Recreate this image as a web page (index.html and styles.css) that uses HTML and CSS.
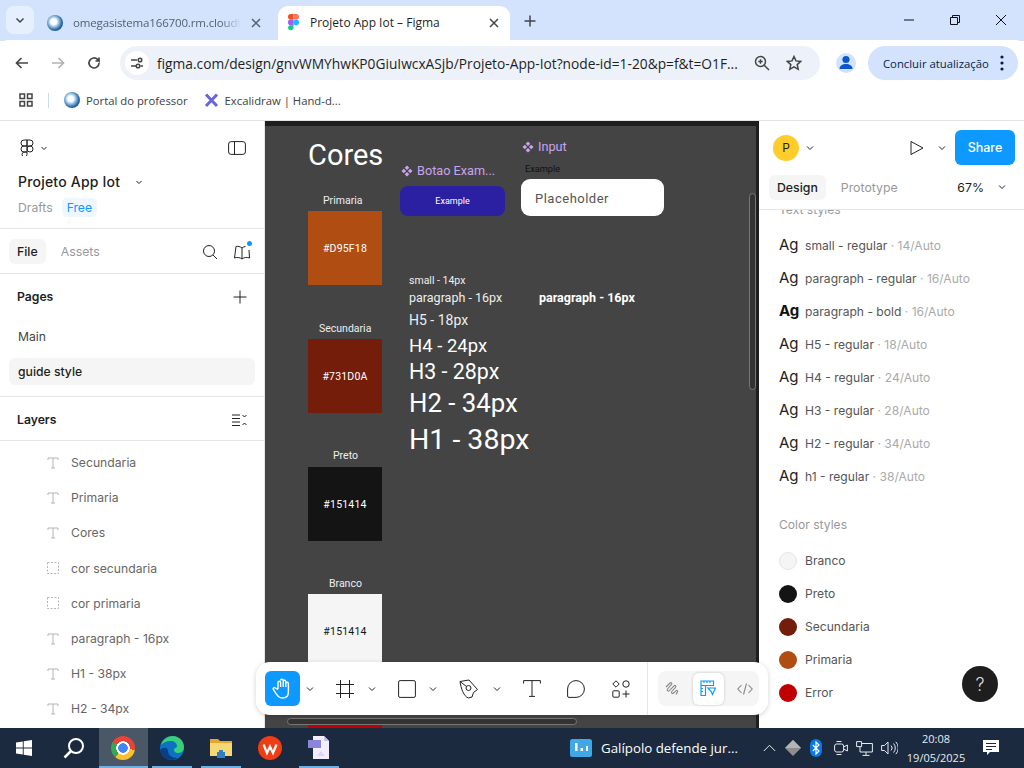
FILE: index.html
```html
<!DOCTYPE html>
<html lang="en">
<head>
    <meta charset="UTF-8">
    <meta name="viewport" content="width=device-width, initial-scale=1.0">
    <title>Projeto App Iot – Figma</title>
    <link rel="stylesheet" href="styles.css">
</head>
<body>
<div class="screen">

    <!-- browser tabs -->
    <div class="tabstrip">
        <div class="tab-menu">
            <svg width="12" height="12" viewBox="0 0 12 12"><path d="M2.5 4.5 6 8l3.5-3.5" class="ic-dark2"/></svg>
        </div>
        <div class="tab">
            <span class="globe"></span>
            <span class="tab-title">omegasistema166700.rm.cloudt</span>
            <svg class="tab-x" width="10" height="10" viewBox="0 0 10 10"><path d="M1 1l8 8M9 1 1 9" class="ic-gray"/></svg>
        </div>
        <div class="tab tab-active">
            <svg width="11" height="17" viewBox="0 0 11 17" class="figma-color">
                <path d="M0 2.8A2.8 2.8 0 0 1 2.8 0h2.7v5.6H2.8A2.8 2.8 0 0 1 0 2.8z" fill="#f24e1e"/>
                <path d="M5.5 0h2.7a2.8 2.8 0 0 1 0 5.6H5.5z" fill="#ff7262"/>
                <path d="M0 8.4a2.8 2.8 0 0 1 2.8-2.8h2.7v5.6H2.8A2.8 2.8 0 0 1 0 8.4z" fill="#a259ff"/>
                <circle cx="8.2" cy="8.4" r="2.8" fill="#1abcfe"/>
                <path d="M0 14a2.8 2.8 0 0 1 2.8-2.8h2.7V14a2.8 2.8 0 0 1-5.5 0z" fill="#0acf83"/>
            </svg>
            <span class="tab-title">Projeto App Iot – Figma</span>
            <svg class="tab-x" width="10" height="10" viewBox="0 0 10 10"><path d="M1 1l8 8M9 1 1 9" class="ic-dark2"/></svg>
        </div>
        <svg class="new-tab" width="12" height="12" viewBox="0 0 12 12"><path d="M6 .5v11M.5 6h11" class="ic-dark2"/></svg>
        <div class="window-btns">
            <svg width="12" height="12" viewBox="0 0 12 12"><path d="M1 6h10" class="ic-thin"/></svg>
            <svg width="12" height="12" viewBox="0 0 12 12"><path d="M1.500 3.500h7v7h-7zM3.500 3.500v-2h7v7h-2" class="ic-thin"/></svg>
            <svg width="14" height="14" viewBox="0 0 14 14"><path d="M2 2l10 10M12 2 2 12" class="ic-thin"/></svg>
        </div>
    </div>

    <!-- address bar -->
    <div class="toolbar">
        <svg width="16" height="16" viewBox="0 0 16 16"><path d="M14 8H2.500M7.500 3l-5 5 5 5" class="ic-nav"/></svg>
        <svg width="16" height="16" viewBox="0 0 16 16"><path d="M2 8h11.500M8.500 3l5 5-5 5" class="ic-nav ic-off"/></svg>
        <svg width="16" height="16" viewBox="0 0 16 16"><path d="M13 8a5 5 0 1 1-1.500-3.600L13 6V2.500M13 6H9.500" class="ic-nav"/></svg>
        <div class="omnibox">
            <span class="site-info">
                <svg width="14" height="14" viewBox="0 0 14 14"><path d="M1 4h6M10.500 10H13M1 10h5" class="ic-dark2"/><circle cx="10" cy="4" r="1.800" class="ic-dark2"/><circle cx="8" cy="10" r="1.800" class="ic-dark2"/></svg>
            </span>
            <span class="url">figma.com/design/gnvWMYhwKP0GiuIwcxASjb/Projeto-App-Iot?node-id=1-20&amp;p=f&amp;t=O1F...</span>
            <svg width="16" height="16" viewBox="0 0 16 16"><circle cx="6.500" cy="6.500" r="5" class="ic-dark2"/><path d="M10.200 10.200 15 15M4.300 6.500h4.400M6.500 4.300v4.400" class="ic-dark2"/></svg>
            <svg width="16" height="16" viewBox="0 0 16 16" class="star"><path d="M8 1.500l2 4.400 4.800.5-3.600 3.200 1 4.700L8 11.900l-4.200 2.400 1-4.700L1.200 6.400 6 5.900z" class="ic-dark2"/></svg>
        </div>
        <span class="profile">
            <svg width="18" height="18" viewBox="0 0 18 18"><circle cx="9" cy="5.500" r="3.600" fill="#0b57d0"/><path d="M2.500 15c0-3.400 3-5 6.500-5s6.500 1.600 6.500 5z" fill="#0b57d0"/></svg>
        </span>
        <div class="update-pill">
            <span>Concluir atualização</span>
            <svg width="4" height="16" viewBox="0 0 4 16"><circle cx="2" cy="2" r="1.600"/><circle cx="2" cy="8" r="1.600"/><circle cx="2" cy="14" r="1.600"/></svg>
        </div>
    </div>

    <!-- bookmarks -->
    <div class="bookmarks">
        <svg width="14" height="14" viewBox="0 0 14 14"><path d="M1 1h4.500v4.500H1zM8.500 1H13v4.500H8.500zM1 8.500h4.500V13H1zM8.500 8.500H13V13H8.500z" class="ic-dark2"/></svg>
        <span class="bm-sep"></span>
        <span class="bm"><span class="globe"></span>Portal do professor</span>
        <span class="bm">
            <svg width="15" height="15" viewBox="0 0 15 15"><path d="M2 1.500 13 13M13 1.500 2 13" stroke="#6965db" stroke-width="3" fill="none"/></svg>
            Excalidraw | Hand-d...
        </span>
    </div>

    <div class="app">
        <!-- left panel -->
        <aside class="left-panel">
            <div class="file-head">
                <div class="head-icons">
                    <div class="logo-wrap">
                        <svg width="16" height="17" viewBox="0 0 16 17"><path d="M8 1H5a3 3 0 0 0 0 6h3zM8 1h3a3 3 0 0 1 0 6H8zM8 7H5a3 3 0 0 0 0 6h3zM8 13H5a2.500 2.500 0 1 0 3 2.500zM14 10a3 3 0 1 1-6 0 3 3 0 0 1 6 0z" class="ic-fig"/></svg>
                        <svg width="8" height="8" viewBox="0 0 8 8"><path d="M1.500 3 4 5.500 6.500 3" class="ic-fig"/></svg>
                    </div>
                    <svg width="18" height="14" viewBox="0 0 18 14"><rect x=".6" y=".6" width="16.800" height="12.800" rx="2.500" class="ic-fig"/><path d="M6.500 1v12" class="ic-fig"/></svg>
                </div>
                <div class="file-name">
                    <span>Projeto App Iot</span>
                    <svg width="8" height="8" viewBox="0 0 8 8"><path d="M1.500 3 4 5.500 6.500 3" class="ic-fig"/></svg>
                </div>
                <div class="file-meta">
                    <span class="drafts">Drafts</span>
                    <span class="free">Free</span>
                </div>
            </div>
            <div class="file-tabs">
                <span class="pill-tab">File</span>
                <span class="muted-tab">Assets</span>
                <svg class="search-ic" width="16" height="16" viewBox="0 0 16 16"><circle cx="7" cy="7" r="5.500" class="ic-fig"/><path d="M11 11l4 4" class="ic-fig"/></svg>
                <span class="library">
                    <svg width="18" height="16" viewBox="0 0 18 16"><path d="M9 4C7.500 2.500 4.500 2 3 2.500L1.500 14C4 13 7.500 13.500 9 15c1.500-1.500 5-2 7.500-1L16 6M9 4c.8-.8 2-1.300 3.500-1.500M9 4v11" class="ic-fig"/></svg>
                    <span class="dot"></span>
                </span>
            </div>
            <div class="pages">
                <div class="section-row">
                    <strong>Pages</strong>
                    <svg width="14" height="14" viewBox="0 0 14 14"><path d="M7 .5v13M.5 7h13" class="ic-fig"/></svg>
                </div>
                <div class="page-row page-first">Main</div>
                <div class="page-row page-on">guide style</div>
            </div>
            <div class="section-row layers-head">
                <strong>Layers</strong>
                <svg width="15" height="12" viewBox="0 0 15 12"><path d="M0 1h8M0 4.500h8M0 8h8M0 11.500h8M10.500 1l2 2 2-2M10.500 11l2-2 2 2" class="ic-fig"/></svg>
            </div>
            <div class="layer-list">
                <div class="layer"><svg width="12" height="12" viewBox="0 0 12 12"><path d="M1 3V1h10v2M6 1v10M4 11h4" class="ic-layer"/></svg>Secundaria</div>
                <div class="layer"><svg width="12" height="12" viewBox="0 0 12 12"><path d="M1 3V1h10v2M6 1v10M4 11h4" class="ic-layer"/></svg>Primaria</div>
                <div class="layer"><svg width="12" height="12" viewBox="0 0 12 12"><path d="M1 3V1h10v2M6 1v10M4 11h4" class="ic-layer"/></svg>Cores</div>
                <div class="layer"><svg width="12" height="12" viewBox="0 0 12 12"><rect x=".5" y=".5" width="11" height="11" class="ic-layer ic-dash"/></svg>cor secundaria</div>
                <div class="layer"><svg width="12" height="12" viewBox="0 0 12 12"><rect x=".5" y=".5" width="11" height="11" class="ic-layer ic-dash"/></svg>cor primaria</div>
                <div class="layer"><svg width="12" height="12" viewBox="0 0 12 12"><path d="M1 3V1h10v2M6 1v10M4 11h4" class="ic-layer"/></svg>paragraph - 16px</div>
                <div class="layer"><svg width="12" height="12" viewBox="0 0 12 12"><path d="M1 3V1h10v2M6 1v10M4 11h4" class="ic-layer"/></svg>H1 - 38px</div>
                <div class="layer"><svg width="12" height="12" viewBox="0 0 12 12"><path d="M1 3V1h10v2M6 1v10M4 11h4" class="ic-layer"/></svg>H2 - 34px</div>
            </div>
        </aside>

        <!-- canvas -->
        <main class="canvas">
            <div class="frame"></div>
            <div class="c-title">Cores</div>

            <div class="sw-label lb-prim">Primaria</div>
            <div class="swatch sw-prim">#D95F18</div>
            <div class="sw-label lb-sec">Secundaria</div>
            <div class="swatch sw-sec">#731D0A</div>
            <div class="sw-label lb-pre">Preto</div>
            <div class="swatch sw-pre">#151414</div>
            <div class="sw-label lb-bra">Branco</div>
            <div class="swatch sw-bra">#151414</div>
            <div class="swatch sw-err"></div>

            <div class="comp-name cn-btn">
                <svg width="12" height="12" viewBox="0 0 12 12"><path d="M6 .5 8.300 2.800 6 5.100 3.700 2.800zM2.800 3.700 5.100 6 2.800 8.300.5 6zM9.200 3.700 11.500 6 9.200 8.300 6.900 6zM6 6.900 8.300 9.200 6 11.500 3.700 9.200z" fill="#c9a5ee"/></svg>
                Botao Exam...
            </div>
            <div class="c-button">Example</div>
            <div class="comp-name cn-input">
                <svg width="12" height="12" viewBox="0 0 12 12"><path d="M6 .5 8.300 2.800 6 5.100 3.700 2.800zM2.800 3.700 5.100 6 2.800 8.300.5 6zM9.200 3.700 11.500 6 9.200 8.300 6.900 6zM6 6.900 8.300 9.200 6 11.500 3.700 9.200z" fill="#c9a5ee"/></svg>
                Input
            </div>
            <div class="c-input-label">Example</div>
            <div class="c-input">Placeholder</div>

            <div class="type t-small">small - 14px</div>
            <div class="type t-par">paragraph - 16px</div>
            <div class="type t-bold">paragraph - 16px</div>
            <div class="type t-h5">H5 - 18px</div>
            <div class="type t-h4">H4 - 24px</div>
            <div class="type t-h3">H3 - 28px</div>
            <div class="type t-h2">H2 - 34px</div>
            <div class="type t-h1">H1 - 38px</div>

            <div class="scroll-v"></div>
            <div class="scroll-h"></div>
        </main>

        <!-- right panel -->
        <aside class="right-panel">
            <div class="right-head">
                <div class="share-row">
                    <span class="avatar">P</span>
                    <svg class="chev-av" width="8" height="8" viewBox="0 0 8 8"><path d="M1 2.500 4 5.500 7 2.500" class="ic-fig"/></svg>
                    <svg class="play" width="14" height="16" viewBox="0 0 14 16"><path d="M1 1.500v13L13 8z" class="ic-fig"/></svg>
                    <svg class="chev-play" width="8" height="8" viewBox="0 0 8 8"><path d="M1 2.500 4 5.500 7 2.500" class="ic-fig"/></svg>
                    <span class="share">Share</span>
                </div>
                <div class="mode-row">
                    <span class="pill-tab">Design</span>
                    <span class="muted-tab">Prototype</span>
                    <span class="zoom-val">67%</span>
                    <svg width="8" height="8" viewBox="0 0 8 8"><path d="M1 2.500 4 5.500 7 2.500" class="ic-fig"/></svg>
                </div>
            </div>
            <div class="styles">
                <div class="styles-title">Text styles</div>
                <div class="style-row"><span class="ag">Ag</span>small - regular<span class="dim">&nbsp;· 14/Auto</span></div>
                <div class="style-row"><span class="ag">Ag</span>paragraph - regular<span class="dim">&nbsp;· 16/Auto</span></div>
                <div class="style-row"><span class="ag ag-bold">Ag</span>paragraph - bold<span class="dim">&nbsp;· 16/Auto</span></div>
                <div class="style-row"><span class="ag">Ag</span>H5 - regular<span class="dim">&nbsp;· 18/Auto</span></div>
                <div class="style-row"><span class="ag">Ag</span>H4 - regular<span class="dim">&nbsp;· 24/Auto</span></div>
                <div class="style-row"><span class="ag">Ag</span>H3 - regular<span class="dim">&nbsp;· 28/Auto</span></div>
                <div class="style-row"><span class="ag">Ag</span>H2 - regular<span class="dim">&nbsp;· 34/Auto</span></div>
                <div class="style-row"><span class="ag">Ag</span>h1 - regular<span class="dim">&nbsp;· 38/Auto</span></div>
                <div class="styles-title colors-title">Color styles</div>
                <div class="style-row"><span class="color c-branco"></span>Branco</div>
                <div class="style-row"><span class="color c-preto"></span>Preto</div>
                <div class="style-row"><span class="color c-sec"></span>Secundaria</div>
                <div class="style-row"><span class="color c-prim"></span>Primaria</div>
                <div class="style-row"><span class="color c-err"></span>Error</div>
            </div>
            <div class="help">?</div>
        </aside>

        <!-- floating tools -->
        <div class="tools">
            <div class="tool-main">
                <span class="tool-on">
                    <svg width="22" height="23" viewBox="0 0 22 23"><path d="M6 12V5.500a1.300 1.300 0 0 1 2.600 0V10m0-6.500a1.300 1.300 0 0 1 2.600 0V10m0-5.500a1.300 1.300 0 0 1 2.600 0V10m0-3.500a1.300 1.300 0 0 1 2.600 0v8.500c0 4-2.500 6-6 6-3 0-4.500-1.500-6-4l-3-4.500c-.8-1.500 1-2.500 2-1.500L6 12.500" class="ic-white"/></svg>
                </span>
                <svg class="tc" width="8" height="8" viewBox="0 0 8 8"><path d="M1 2.500 4 5.500 7 2.500" class="ic-fig"/></svg>
                <svg class="ti" width="18" height="18" viewBox="0 0 18 18"><path d="M4.500 0v18M13.500 0v18M0 4.500h18M0 13.500h18" class="ic-fig"/></svg>
                <svg class="tc" width="8" height="8" viewBox="0 0 8 8"><path d="M1 2.500 4 5.500 7 2.500" class="ic-fig"/></svg>
                <svg class="ti" width="18" height="18" viewBox="0 0 18 18"><rect x=".6" y=".6" width="16.800" height="16.800" rx="1.500" class="ic-fig"/></svg>
                <svg class="tc" width="8" height="8" viewBox="0 0 8 8"><path d="M1 2.500 4 5.500 7 2.500" class="ic-fig"/></svg>
                <svg class="ti" width="20" height="20" viewBox="0 0 20 20"><path d="M1 2.500 10 1l8.500 9.500-4 3-1.500 4.500-3.500 1C4.500 17.500 2 9 1 2.500z" class="ic-fig"/><circle cx="9.500" cy="9" r="2.500" class="ic-fig"/><path d="M1 2.500 7.500 7.500" class="ic-fig"/></svg>
                <svg class="tc" width="8" height="8" viewBox="0 0 8 8"><path d="M1 2.500 4 5.500 7 2.500" class="ic-fig"/></svg>
                <svg class="ti" width="18" height="17" viewBox="0 0 18 17"><path d="M.6 3.500V.6h16.800v2.900M9 .6v15.800M6 16.400h6" class="ic-fig"/></svg>
                <svg class="ti" width="18" height="18" viewBox="0 0 18 18"><path d="M9 .6a8.400 8.400 0 0 1 0 16.800H2a1.400 1.400 0 0 1-1.400-1.400V9A8.400 8.400 0 0 1 9 .6z" class="ic-fig"/></svg>
                <svg class="ti" width="18" height="18" viewBox="0 0 18 18"><path d="M4 .8 7.200 4 4 7.200.8 4z" class="ic-fig"/><circle cx="14" cy="4" r="3.200" class="ic-fig"/><rect x=".8" y="10.800" width="6.400" height="6.400" rx="1" class="ic-fig"/><path d="M14 10.500v7M10.500 14h7" class="ic-fig"/></svg>
            </div>
            <div class="tool-modes">
                <svg width="16" height="16" viewBox="0 0 16 16"><path d="M2 6 6 2c1-1 2.500.2 1.500 1.300L3.500 8c-1 1.200.5 2.800 1.800 1.600L10 4.800c1-1 2.500.3 1.500 1.500L7.800 10.500c-1 1.200.5 2.700 1.800 1.500l2.400-2.200c1-.9 2.200.3 1.400 1.300L12 13.500" class="ic-mode"/></svg>
                <span class="mode-on">
                    <svg width="16" height="17" viewBox="0 0 16 17"><path d="M1 1h12.500v4.500H5.500V15.500H1zM1 5.500h4.500M4 1v2M7 1v2M10 1v2M1 8.500h2M1 11.500h2" class="ic-blue"/><path d="M8 8h7.500l-3 6.500-1.300-3z" class="ic-blue"/></svg>
                </span>
                <svg width="16" height="12" viewBox="0 0 16 12"><path d="M4.500 2 .8 6l3.700 4M11.500 2l3.700 4-3.700 4M9.500 .5l-3 11" class="ic-mode"/></svg>
            </div>
        </div>
    </div>

    <!-- windows taskbar -->
    <footer class="taskbar">
        <span class="tb-item tb-start">
            <svg width="16" height="16" viewBox="0 0 16 16"><path d="M0 2.400 6.800 1.400v6.200H0zM7.700 1.300 16 0v7.600H7.700zM0 8.500h6.800v6.100L0 13.600zM7.700 8.500H16V16l-8.300-1.200z" fill="#fff"/></svg>
        </span>
        <span class="tb-item tb-search">
            <svg width="22" height="22" viewBox="0 0 22 22"><circle cx="13" cy="9" r="7" fill="none" stroke="#fff" stroke-width="2"/><path d="M8 14 1.500 20.500" stroke="#fff" stroke-width="2.500" fill="none"/></svg>
        </span>
        <span class="tb-item tb-app tb-current"><span class="chrome-ic"></span></span>
        <span class="tb-item tb-app tb-open">
            <svg width="24" height="24" viewBox="0 0 24 24"><circle cx="12" cy="12" r="12" fill="#0c72c4"/><path d="M1 9C3 3 8 0 13 0c6 0 11 5 11 11 0 4-3 6-6 6-2 0-4-1-4-3s3-2 3-4c0-3-3-5-6-5C6 5 3 7 1 9z" fill="#38d17a"/><path d="M8 15c0 4 4 7 9 7-2 1.500-4 2-5 2-6 0-11-4-12-10 3-3 8-3 8 1z" fill="#0a3f86"/></svg>
        </span>
        <span class="tb-item tb-app tb-open">
            <svg width="22" height="20" viewBox="0 0 22 20"><path d="M0 1h8l2 2h12v15H0z" fill="#e3a82b"/><path d="M0 5h22v13H0z" fill="#f8d775"/><path d="M7 14h8v6H7z" fill="#2f7fc1"/><path d="M9 12h4v2H9z" fill="#2f7fc1"/></svg>
        </span>
        <span class="tb-item tb-app">
            <svg width="24" height="24" viewBox="0 0 24 24"><circle cx="12" cy="12" r="12" fill="#f03d14"/><path d="M5.500 8.500 9 17l3-6.500 3 6.500 3.500-8.500" fill="none" stroke="#fff" stroke-width="2.200"/></svg>
        </span>
        <span class="tb-item tb-app tb-open">
            <svg width="22" height="24" viewBox="0 0 22 24"><path d="M5 0h11l5 5v18H5z" fill="#f2eefb"/><path d="M16 0l5 5h-5z" fill="#c9bdf0"/><path d="M0 4h13v8H0z" fill="#8d84dc"/><path d="M9 20l4-5 4 5z" fill="#ddd6f6"/></svg>
        </span>
        <div class="tb-news">
            <svg width="22" height="18" viewBox="0 0 22 18"><rect width="22" height="18" rx="2.500" fill="#3fa9e8"/><path d="M5 4h2.500v8H5zM10.500 9H13v3h-2.500zM16 7h2v5h-2z" fill="#fff"/></svg>
            <span>Galípolo defende jur...</span>
        </div>
        <div class="tray">
            <svg width="13" height="8" viewBox="0 0 13 8"><path d="M.8 7 6.500 1.300 12.200 7" class="ic-tray"/></svg>
            <svg width="16" height="16" viewBox="0 0 16 16"><path d="M8 0l8 8-8 8-8-8z" fill="#8e8e8e"/><path d="M8 0l8 8H0z" fill="#b5b5b5"/></svg>
            <span class="bt">
                <svg width="8" height="14" viewBox="0 0 8 14"><path d="M.8 4 7 10 4 13V1l3 3-6.200 6" fill="none" stroke="#fff" stroke-width="1.200"/></svg>
            </span>
            <svg class="tray-meet" width="14" height="16" viewBox="0 0 14 16"><rect x=".6" y="4" width="9" height="8" rx="2" class="ic-tray"/><path d="M9.600 7 13.400 5v6L9.600 9M2.500 1.500h5M2.500 14.500h5" class="ic-tray"/></svg>
            <svg class="tray-net" width="17" height="15" viewBox="0 0 17 15"><path d="M.6.600h5v5h-5zM5.600 2.500h10.800v8.500H4v-5.400M10 11v3M6.500 14.400h7" class="ic-tray"/></svg>
            <svg class="tray-vol" width="17" height="14" viewBox="0 0 17 14"><path d="M.6 4.500h2.800L7 1v12L3.400 9.500H.6zM10 4.500a3.500 3.500 0 0 1 0 5M12.500 2.500a6.500 6.500 0 0 1 0 9M14.800.8a9 9 0 0 1 0 12.400" class="ic-tray"/></svg>
            <div class="clock"><span>20:08</span><span>19/05/2025</span></div>
            <svg class="notif" width="17" height="16" viewBox="0 0 17 16"><path d="M0 0h16v12H7l-3 3v-3H0z" fill="#fff"/><path d="M3 3.500h10M3 6.500h10M3 9.500h6" stroke="#1b2a3f" fill="none"/></svg>
        </div>
    </footer>
</div>
</body>
</html>
```

FILE: styles.css
```css
* {
    box-sizing: border-box;
}
html, body {
    margin: 0;
    padding: 0;
}
body {
    font-family: Inter, "Liberation Sans", sans-serif;
    color: #1e1e1e;
    background: #fff;
}
svg {
    flex: none;
    display: block;
}
.screen {
    width: 1024px;
    height: 768px;
    display: flex;
    flex-direction: column;
    overflow: hidden;
}

/* icon strokes */
.ic-dark2, .ic-gray, .ic-thin, .ic-nav, .ic-fig, .ic-layer, .ic-white, .ic-mode, .ic-blue, .ic-tray {
    fill: none;
    stroke: #444;
    stroke-width: 1.500;
}
.ic-gray { stroke: #55606e; }
.ic-thin { stroke: #111; stroke-width: 1; }
.ic-nav { stroke: #474747; stroke-width: 1.700; }
.ic-off { stroke: #b0b3b8; }
.ic-fig { stroke: #222; stroke-width: 1; }
.ic-layer { stroke: #b5b5b5; stroke-width: 1; }
.ic-dash { stroke-dasharray: 2 1.500; }
.ic-white { stroke: #fff; stroke-width: 1.400; }
.ic-mode { stroke: #888; stroke-width: 1.100; }
.ic-blue { stroke: #0d99ff; stroke-width: 1.200; }
.ic-tray { stroke: #e8ecf1; stroke-width: 1; }

/* browser chrome */
.tabstrip {
    height: 41px;
    background: #d3e3fd;
    display: flex;
    align-items: flex-end;
    flex: none;
    padding-left: 6px;
    font-family: "Open Sans", "Noto Sans", sans-serif;
    font-size: 12px;
}
.tab-menu {
    width: 28px;
    height: 28px;
    margin-bottom: 7px;
    border-radius: 8px;
    background: #e6effe;
    display: flex;
    align-items: center;
    justify-content: center;
}
.tab {
    width: 238px;
    height: 35px;
    display: flex;
    align-items: center;
    padding: 0 11px 2px 13px;
}
.tab .tab-title {
    margin-left: 10px;
    flex: 1;
    white-space: nowrap;
    font-size: 11.500px;
    letter-spacing: -.15px;
    color: #55606e;
    -webkit-mask-image: linear-gradient(90deg, #000 88%, transparent);
    mask-image: linear-gradient(90deg, #000 88%, transparent);
}
.tab-x {
    margin-left: 10px;
}
.tab-active {
    width: 232px;
    margin-left: 6px;
    background: #fff;
    border-radius: 10px 10px 0 0;
    padding-left: 10px;
}
.tab-active .tab-title {
    color: #1f1f1f;
    font-size: 12px;
    letter-spacing: 0;
    -webkit-mask-image: none;
    mask-image: none;
    margin-left: 11px;
}
.globe {
    width: 16px;
    height: 16px;
    flex: none;
    border-radius: 50%;
    background: radial-gradient(circle at 42% 42%, #fff 0 22%, #9cc6e6 38%, #2a6ca8 62%, #0e2c5c 100%);
}
.new-tab {
    margin: 0 0 14px 14px;
}
.window-btns {
    margin-left: auto;
    width: 140px;
    height: 41px;
    display: flex;
    align-items: center;
    justify-content: space-between;
    padding: 0 16px 2px 19px;
}
.toolbar {
    height: 40px;
    flex: none;
    background: #fff;
    margin-top: -1px;
    border-radius: 8px 8px 0 0;
    display: flex;
    align-items: center;
    padding: 6px 0 0 14px;
    gap: 20px;
    font-family: "Open Sans", "Noto Sans", sans-serif;
}
.omnibox {
    width: 700px;
    height: 34px;
    margin-left: -2px;
    border-radius: 17px;
    background: #edf2fa;
    display: flex;
    align-items: center;
    padding: 0 16px 0 5px;
    flex: none;
}
.site-info {
    width: 24px;
    height: 24px;
    border-radius: 50%;
    background: #fff;
    display: flex;
    align-items: center;
    justify-content: center;
    flex: none;
}
.url {
    margin-left: 8px;
    font-size: 13.750px;
    color: #1f1f1f;
    white-space: nowrap;
    width: 597px;
    flex: none;
}
.star {
    margin-left: 16px;
}
.profile {
    width: 20px;
    height: 20px;
    flex: none;
    margin-left: -4px;
    border-radius: 50%;
    background: #d3e3fd;
    display: flex;
    align-items: center;
    justify-content: center;
}
.update-pill {
    width: 150px;
    height: 34px;
    flex: none;
    margin-left: -8px;
    border-radius: 17px;
    background: #d3e3fd;
    display: flex;
    align-items: center;
    justify-content: space-between;
    padding: 0 14px 0 15px;
    font-size: 11.300px;
    color: #041e49;
    white-space: nowrap;
}
.update-pill svg {
    fill: #041e49;
}
.bookmarks {
    height: 41px;
    flex: none;
    background: #fff;
    display: flex;
    align-items: center;
    padding: 0 0 0 19px;
    border-bottom: 1px solid #e3e3e3;
    font-family: "Open Sans", "Noto Sans", sans-serif;
    font-size: 11.300px;
    color: #3c4043;
}
.bm-sep {
    width: 1px;
    height: 15px;
    background: #c9dafb;
    margin: 0 15px;
}
.bm {
    display: flex;
    align-items: center;
    gap: 6px;
    margin-right: 16px;
    white-space: nowrap;
}

/* figma layout */
.app {
    height: 607px;
    flex: none;
    display: flex;
    position: relative;
}
.left-panel {
    width: 265px;
    flex: none;
    border-right: 1px solid #e6e6e6;
    display: flex;
    flex-direction: column;
    font-size: 12.200px;
}
.file-head {
    height: 108px;
    flex: none;
    border-bottom: 1px solid #e6e6e6;
    padding: 18px 18px 0 19px;
}
.head-icons {
    display: flex;
    align-items: center;
    justify-content: space-between;
}
.logo-wrap {
    display: flex;
    align-items: center;
    gap: 5px;
}
.file-name {
    margin-top: 17px;
    margin-left: -1px;
    display: flex;
    align-items: center;
    gap: 15px;
    font-size: 14px;
    font-weight: 500;
    letter-spacing: .2px;
}
.file-meta {
    margin-top: 8px;
    margin-left: -1px;
    display: flex;
    align-items: center;
    gap: 9px;
}
.drafts {
    color: #999;
}
.free {
    color: #0d99ff;
    background: #eef7ff;
    border-radius: 5px;
    padding: 2px 5px;
}
.file-tabs {
    height: 45px;
    flex: none;
    border-bottom: 1px solid #e6e6e6;
    display: flex;
    align-items: center;
    padding: 1px 13px 0 9px;
}
.pill-tab {
    background: #f5f5f5;
    border-radius: 6px;
    padding: 5px 8px;
    font-weight: 500;
    font-size: 12.300px;
}
.muted-tab {
    color: #999;
    margin-left: 15px;
    font-size: 12.300px;
}
.search-ic {
    margin-left: auto;
}
.library {
    position: relative;
    margin-left: 15px;
}
.dot {
    position: absolute;
    top: -3px;
    right: -1px;
    width: 5px;
    height: 5px;
    border-radius: 50%;
    background: #0d99ff;
}
.pages {
    height: 123px;
    flex: none;
    border-bottom: 1px solid #e6e6e6;
}
.section-row {
    display: flex;
    align-items: center;
    justify-content: space-between;
    padding: 1px 17px 0;
    height: 44px;
}
.section-row strong {
    font-weight: 600;
}
.page-row {
    height: 27px;
    margin: 0 9px 8px;
    padding-left: 9px;
    display: flex;
    align-items: center;
    border-radius: 6px;
    color: #444;
}
.page-first {
    margin-top: 5px;
}
.page-on {
    background: #f5f5f5;
    color: #1e1e1e;
    font-weight: 500;
}
.layers-head {
    height: 44px;
    flex: none;
    padding-top: 2px;
    border-bottom: 1px solid #e6e6e6;
}
.layer-list {
    flex: 1;
    overflow: hidden;
    padding-top: 4px;
}
.layer {
    height: 35.200px;
    display: flex;
    align-items: center;
    padding-left: 47px;
    gap: 12px;
    color: #666;
}

/* canvas, a free board so items sit at their own coordinates */
.canvas {
    flex: 1;
    position: relative;
    overflow: hidden;
    background: #1e1e1e;
    font-family: Roboto, sans-serif;
    color: #fff;
}
.frame {
    position: absolute;
    top: 5px;
    left: 0;
    right: 3px;
    bottom: 0;
    background: #444;
}
.c-title {
    position: absolute;
    left: 43px;
    top: 16px;
    font-size: 29px;
    line-height: 36px;
}
.sw-label {
    position: absolute;
    font-size: 10.500px;
    line-height: 14px;
    color: #eee;
}
.lb-prim { left: 58px; top: 73px; }
.lb-sec { left: 54px; top: 201px; }
.lb-pre { left: 68px; top: 328px; }
.lb-bra { left: 64px; top: 456px; }
.swatch {
    position: absolute;
    left: 43px;
    width: 74px;
    height: 74px;
    display: flex;
    align-items: center;
    justify-content: center;
    font-size: 10.500px;
    letter-spacing: .2px;
}
.sw-prim { top: 90px; background: #af4d13; }
.sw-sec { top: 218px; background: #731d0a; }
.sw-pre { top: 346px; background: #151414; }
.sw-bra { top: 473px; background: #f5f5f5; color: #151414; }
.sw-err { top: 602px; background: #c00000; }
.comp-name {
    position: absolute;
    display: flex;
    align-items: center;
    gap: 4px;
    font-size: 12.700px;
    color: #c9a5ee;
    white-space: nowrap;
}
.cn-btn { left: 136px; top: 42px; }
.cn-input { left: 257px; top: 18px; }
.c-button {
    position: absolute;
    left: 135px;
    top: 65px;
    width: 105px;
    height: 30px;
    border-radius: 8px;
    background: #2a20a1;
    font-size: 9px;
    display: flex;
    align-items: center;
    justify-content: center;
}
.c-input-label {
    position: absolute;
    left: 260px;
    top: 42px;
    font-size: 9.200px;
    color: #111;
}
.c-input {
    position: absolute;
    left: 256px;
    top: 58px;
    width: 143px;
    height: 37px;
    border-radius: 9px;
    background: #fff;
    color: #555;
    font-size: 13px;
    letter-spacing: .5px;
    display: flex;
    align-items: center;
    padding: 1px 0 0 14px;
}
.type {
    position: absolute;
    left: 144px;
    white-space: nowrap;
    line-height: 1;
}
.t-small { top: 155px; font-size: 10.500px; color: #eee; }
.t-par { top: 171px; font-size: 12.500px; color: #eee; }
.t-bold { top: 171px; left: 274px; font-size: 12.500px; font-weight: 700; }
.t-h5 { top: 192px; font-size: 14px; color: #eee; }
.t-h4 { top: 216px; font-size: 18.500px; }
.t-h3 { top: 240px; font-size: 21.400px; }
.t-h2 { top: 270px; font-size: 25.800px; }
.t-h1 { top: 305px; font-size: 28.500px; }
.scroll-v {
    position: absolute;
    left: 484px;
    top: 72px;
    width: 7px;
    height: 197px;
    border: 1px solid #777;
    border-radius: 4px;
    background: #333;
}
.scroll-h {
    position: absolute;
    left: 22px;
    top: 597px;
    width: 290px;
    height: 7px;
    border: 1px solid #777;
    border-radius: 4px;
    background: #333;
    z-index: 2;
}

/* right panel */
.right-panel {
    flex: none;
    width: 265px;
    position: relative;
    background: #fff;
    display: flex;
    flex-direction: column;
    font-size: 12.100px;
}
.right-head {
    height: 89px;
    flex: none;
    border-bottom: 1px solid #e6e6e6;
    padding: 9px 9px 0 10px;
    background: #fff;
    position: relative;
    z-index: 1;
}
.share-row {
    display: flex;
    align-items: center;
    height: 35px;
    padding-left: 4px;
}
.avatar {
    width: 26px;
    height: 26px;
    border-radius: 50%;
    background: #ffcd29;
    display: flex;
    align-items: center;
    justify-content: center;
    font-size: 12px;
}
.chev-av { margin-left: 7px; }
.play { margin-left: 96px; }
.chev-play { margin-left: 14px; }
.share {
    margin-left: auto;
    width: 60px;
    height: 35px;
    border-radius: 6px;
    background: #0d99ff;
    color: #fff;
    font-weight: 500;
    font-size: 12.500px;
    display: flex;
    align-items: center;
    justify-content: center;
}
.mode-row {
    display: flex;
    align-items: center;
    margin-top: 9px;
    height: 26px;
    font-size: 12.300px;
}
.zoom-val {
    margin-left: auto;
    margin-right: 14px;
}
.mode-row svg {
    margin-right: 9px;
}
.styles {
    flex: 1;
    overflow: hidden;
    margin-top: -9px;
    padding-left: 20px;
}
.styles-title {
    height: 17px;
    color: #999;
    line-height: 17px;
}
.style-row {
    height: 33px;
    display: flex;
    align-items: center;
    color: #555;
    white-space: nowrap;
}
.styles-title + .style-row {
    margin-top: 11px;
}
.ag {
    width: 26px;
    margin-top: -2px;
    font-size: 15px;
    color: #222;
    flex: none;
}
.ag-bold {
    font-weight: 700;
    color: #111;
}
.dim {
    color: #aaa;
}
.colors-title {
    margin-top: 23px;
}
.colors-title + .style-row {
    margin-top: 11px;
}
.color {
    width: 18px;
    height: 18px;
    border-radius: 50%;
    margin-right: 8px;
    flex: none;
}
.c-branco { background: #f5f5f5; border: 1px solid #e6e6e6; }
.c-preto { background: #151414; }
.c-sec { background: #731d0a; }
.c-prim { background: #af4d13; }
.c-err { background: #c00000; }
.help {
    position: absolute;
    right: 26px;
    bottom: 26px;
    width: 36px;
    height: 36px;
    border-radius: 50%;
    background: #1e1e1e;
    color: #ddd;
    font-size: 18px;
    font-weight: 300;
    display: flex;
    align-items: center;
    justify-content: center;
}

/* floating toolbar */
.tools {
    position: absolute;
    left: 256px;
    top: 541px;
    width: 512px;
    height: 53px;
    border-radius: 14px;
    background: #fff;
    box-shadow: 0 1px 5px rgba(0, 0, 0, .18);
    display: flex;
    align-items: center;
    z-index: 3;
}
.tool-main {
    width: 392px;
    height: 100%;
    flex: none;
    display: flex;
    align-items: center;
    padding-left: 9px;
    border-right: 1px solid #e6e6e6;
}
.tool-on {
    width: 35px;
    height: 35px;
    border-radius: 6px;
    background: #0d99ff;
    display: flex;
    align-items: center;
    justify-content: center;
}
.tc { margin-left: 6px; }
.ti { margin-left: 26.500px; }
.tool-main .tc + .ti { margin-left: 22px; }
.tool-main .ti + .tc { margin-left: 13.500px; }
.tool-modes {
    margin-left: 10px;
    width: 101px;
    height: 35px;
    border-radius: 8px;
    background: #f5f5f5;
    display: flex;
    align-items: center;
    justify-content: space-around;
}
.mode-on {
    width: 31px;
    height: 32px;
    border-radius: 6px;
    background: #fff;
    box-shadow: 0 0 3px rgba(0, 0, 0, .2);
    display: flex;
    align-items: center;
    justify-content: center;
}

/* taskbar */
.taskbar {
    height: 40px;
    flex: none;
    background: #1b2a3f;
    display: flex;
    align-items: center;
    position: relative;
    z-index: 4;
    color: #fff;
    font-family: "Open Sans", "Noto Sans", sans-serif;
}
.tb-item {
    height: 40px;
    display: flex;
    align-items: center;
    justify-content: center;
}
.tb-start { width: 48px; }
.tb-search { width: 51px; }
.tb-app {
    width: 49px;
    padding-right: 1px;
    position: relative;
}
.tb-current {
    background: #4a5766;
}
.tb-open::after, .tb-current::after {
    content: "";
    position: absolute;
    left: 4px;
    right: 5px;
    bottom: 0;
    height: 2px;
    background: #6cb0e4;
}
.tb-current::after {
    left: 0;
    right: 0;
}
.chrome-ic {
    width: 24px;
    height: 24px;
    border-radius: 50%;
    background:
        radial-gradient(circle, #4285f4 0 4.500px, #fff 5px 6.500px, transparent 7px),
        conic-gradient(from 0deg, #ea4335 0 100deg, #fbc02d 100deg 220deg, #34a853 220deg 300deg, #ea4335 300deg);
}
.tb-news {
    display: flex;
    align-items: center;
    gap: 9px;
    margin-left: 226px;
    font-size: 13.300px;
    white-space: nowrap;
}
.tray {
    margin-left: auto;
    display: flex;
    align-items: center;
    gap: 9px;
    padding-right: 24px;
}
.tray-meet { margin-left: 3px; }
.tray-net { margin-left: -1px; }
.tray-vol { margin-left: -1px; }
.bt {
    width: 12px;
    height: 18px;
    border-radius: 6px;
    background: #0b78e8;
    display: flex;
    align-items: center;
    justify-content: center;
}
.clock {
    width: 70px;
    margin-left: -6px;
    display: flex;
    flex-direction: column;
    align-items: center;
    gap: 1px;
    font-size: 11px;
    line-height: 18px;
    color: #e8ecf1;
}
.notif {
    margin-left: 3px;
}
```
